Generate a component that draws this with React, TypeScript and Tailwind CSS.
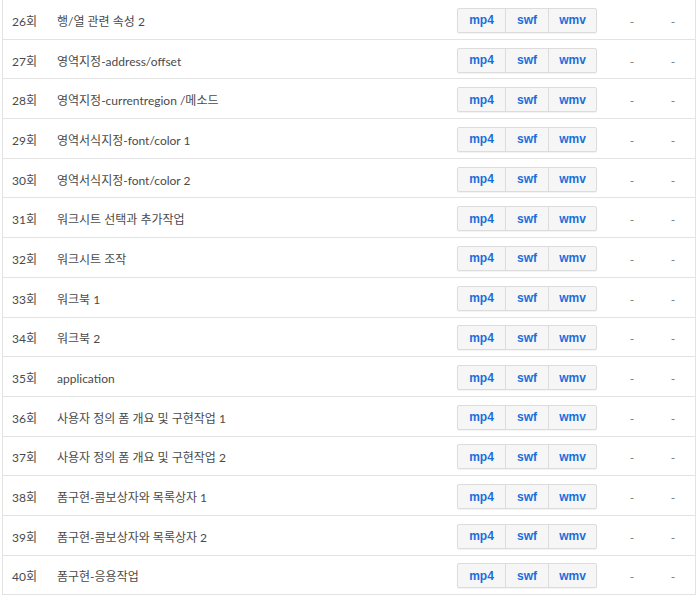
import React from "react";

const lessons: [string, string][] = [
  ["26회", "행/열 관련 속성 2"],
  ["27회", "영역지정-address/offset"],
  ["28회", "영역지정-currentregion /메소드"],
  ["29회", "영역서식지정-font/color 1"],
  ["30회", "영역서식지정-font/color 2"],
  ["31회", "워크시트 선택과 추가작업"],
  ["32회", "워크시트 조작"],
  ["33회", "워크북 1"],
  ["34회", "워크북 2"],
  ["35회", "application"],
  ["36회", "사용자 정의 폼 개요 및 구현작업 1"],
  ["37회", "사용자 정의 폼 개요 및 구현작업 2"],
  ["38회", "폼구현-콤보상자와 목록상자 1"],
  ["39회", "폼구현-콤보상자와 목록상자 2"],
  ["40회", "폼구현-응용작업"],
];

const formats = [
  { label: "mp4", w: "w-[47px]" },
  { label: "swf", w: "w-[43px]" },
  { label: "wmv", w: "w-[48px]" },
];

const LessonRow = ({ no, title }: { no: string; title: string }) => (
  <div className="flex items-center h-[39.7px] border-b border-[#e3e3e3] text-[12px] text-[#4a4a4a]">
    <div className="w-[54px] pl-[9px] pt-[5px]">{no}</div>
    <div className="flex-1 truncate pt-[5px]">{title}</div>
    <div className="flex h-[25px] mt-[2px] rounded-[2px] border border-[#dcdcdc] bg-[#f6f6f6] shadow-[0_1px_1px_rgba(0,0,0,0.05)]">
      {formats.map((f, i) => (
        <button
          key={f.label}
          className={`${f.w} h-full flex items-center justify-center font-bold text-[#1a6fdc] ${
            i > 0 ? "border-l border-[#dcdcdc]" : ""
          }`}
          style={{ fontFamily: '"Liberation Sans", Arial, sans-serif' }}
        >
          {f.label}
        </button>
      ))}
    </div>
    <div className="w-[70px] text-center text-[#777] pt-[5px]">-</div>
    <div className="w-[12px] text-center text-[#777] pt-[5px]">-</div>
    <div className="w-[16px]" />
  </div>
);

export default function App() {
  return (
    <div
      className="w-[700px] h-[597px] bg-white"
      style={{ fontFamily: 'Lato, "Noto Sans CJK KR", sans-serif' }}
    >
      <div className="ml-[2px] w-[694px] border-x border-[#e3e3e3]">
        {lessons.map(([no, title]) => (
          <LessonRow key={no} no={no} title={title} />
        ))}
      </div>
    </div>
  );
}
